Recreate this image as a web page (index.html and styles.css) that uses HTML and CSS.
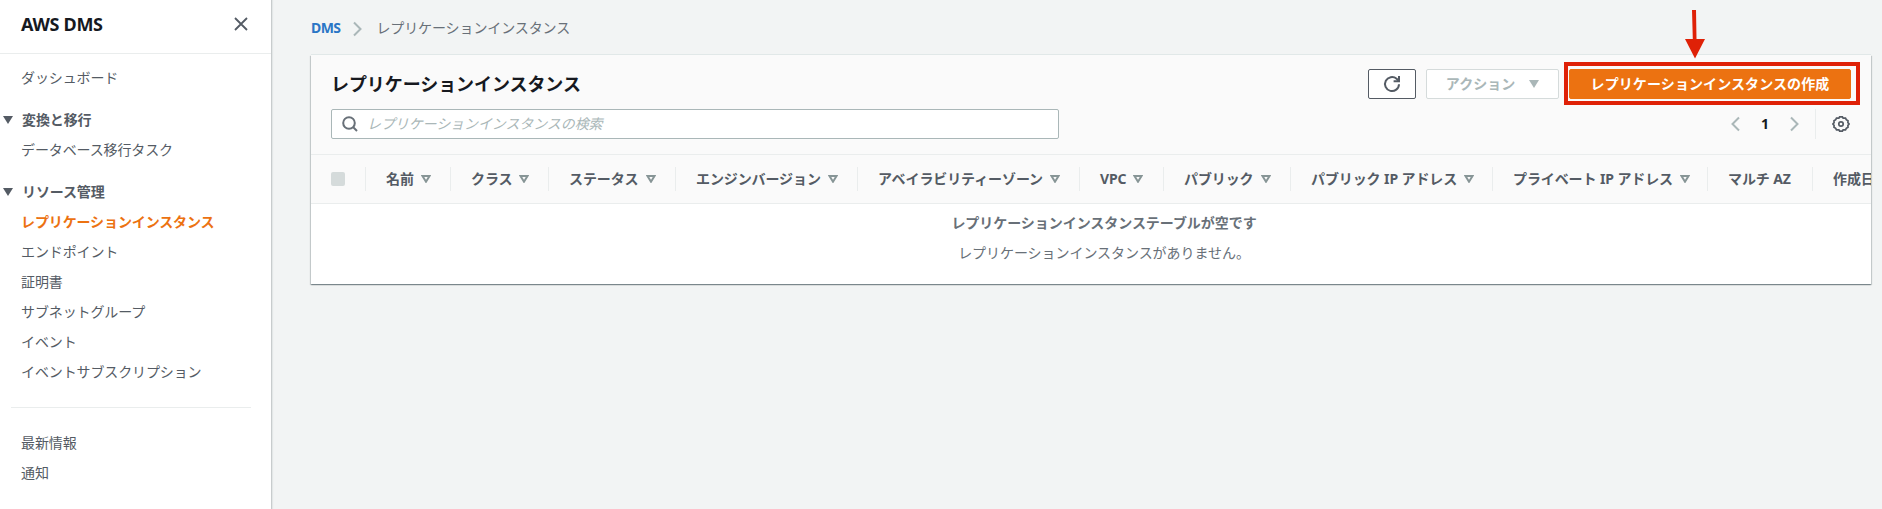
FILE: index.html
```html
<!DOCTYPE html>
<html lang="ja">
<head>
<meta charset="utf-8">
<title>AWS DMS</title>
<link rel="stylesheet" href="styles.css">
</head>
<body>
<div class="app">
  <nav class="sidebar">
    <div class="sidebar-head">
      <span>AWS DMS</span>
      <svg class="close" width="14" height="14" viewBox="0 0 14 14"><path d="M1 1l12 12M13 1L1 13"/></svg>
    </div>
    <ul class="nav">
      <li>ダッシュボード</li>
      <li class="section"><svg width="10" height="8" viewBox="0 0 10 8"><path d="M0 0h10L5 8z"/></svg>変換と移行</li>
      <li>データベース移行タスク</li>
      <li class="section"><svg width="10" height="8" viewBox="0 0 10 8"><path d="M0 0h10L5 8z"/></svg>リソース管理</li>
      <li class="active">レプリケーションインスタンス</li>
      <li>エンドポイント</li>
      <li>証明書</li>
      <li>サブネットグループ</li>
      <li>イベント</li>
      <li>イベントサブスクリプション</li>
    </ul>
    <ul class="nav nav-extra">
      <li>最新情報</li>
      <li>通知</li>
    </ul>
  </nav>
  <main class="main">
    <div class="breadcrumb">
      <a class="crumb-link">DMS</a>
      <svg width="9" height="16" viewBox="0 0 9 16"><path d="M1 1.5L7.5 8 1 14.5"/></svg>
      <span>レプリケーションインスタンス</span>
    </div>
    <section class="panel">
      <div class="panel-head">
        <div class="title-row">
          <h1>レプリケーションインスタンス</h1>
          <div class="actions">
            <button class="btn refresh"><svg width="18" height="18" viewBox="0 0 18 18"><path d="M16 9.2A7 7 0 1 1 13.6 3.8L16 6"/><path d="M16 1v5.2h-5.4"/></svg></button>
            <button class="btn disabled">アクション<svg width="10" height="8" viewBox="0 0 10 8"><path d="M0 0h10L5 8z"/></svg></button>
            <div class="create-wrap">
              <button class="btn primary">レプリケーションインスタンスの作成</button>
              <span class="highlight"></span>
              <svg class="arrow" width="22" height="50" viewBox="0 0 22 50"><path d="M8 1h4l.5 29h8.500L11 49.500 1 30h7.800z"/></svg>
            </div>
          </div>
        </div>
        <div class="filter-row">
          <div class="search">
            <svg width="16" height="16" viewBox="0 0 16 16"><circle cx="7" cy="7" r="5.800"/><path d="M11 11l4 4"/></svg>
            <span>レプリケーションインスタンスの検索</span>
          </div>
          <div class="pager">
            <svg width="9" height="16" viewBox="0 0 9 16"><path d="M8 1.500L1.500 8 8 14.500"/></svg>
            <b>1</b>
            <svg width="9" height="16" viewBox="0 0 9 16"><path d="M1 1.500L7.500 8 1 14.500"/></svg>
            <span class="settings"><svg width="18" height="18" viewBox="0 0 18 18"><path d="M7.600 1.900h2.800l.7 1.300 2.400-.1.800 1.600 1.700 1-.1 1.900 1.200 1.400-1.200 1.400.1 1.900-1.700 1-.8 1.600-2.400-.1-.7 1.300H7.600l-.7-1.300-2.400.1-.8-1.600-1.700-1 .1-1.900L.9 9l1.200-1.400L2 5.700l1.700-1 .8-1.600 2.400.1z"/><circle cx="9" cy="9" r="2.200"/></svg></span>
          </div>
        </div>
      </div>
      <div class="thead">
        <div class="th check"><i></i></div>
        <div class="th">名前<svg class="sort" width="10" height="8" viewBox="0 0 10 8"><path d="M1.500 1h7L5 6.700z"/></svg></div>
        <div class="th">クラス<svg class="sort" width="10" height="8" viewBox="0 0 10 8"><path d="M1.500 1h7L5 6.700z"/></svg></div>
        <div class="th">ステータス<svg class="sort" width="10" height="8" viewBox="0 0 10 8"><path d="M1.500 1h7L5 6.700z"/></svg></div>
        <div class="th">エンジンバージョン<svg class="sort" width="10" height="8" viewBox="0 0 10 8"><path d="M1.500 1h7L5 6.700z"/></svg></div>
        <div class="th">アベイラビリティーゾーン<svg class="sort" width="10" height="8" viewBox="0 0 10 8"><path d="M1.500 1h7L5 6.700z"/></svg></div>
        <div class="th">VPC<svg class="sort" width="10" height="8" viewBox="0 0 10 8"><path d="M1.500 1h7L5 6.700z"/></svg></div>
        <div class="th">パブリック<svg class="sort" width="10" height="8" viewBox="0 0 10 8"><path d="M1.500 1h7L5 6.700z"/></svg></div>
        <div class="th">パブリック IP アドレス<svg class="sort" width="10" height="8" viewBox="0 0 10 8"><path d="M1.500 1h7L5 6.700z"/></svg></div>
        <div class="th">プライベート IP アドレス<svg class="sort" width="10" height="8" viewBox="0 0 10 8"><path d="M1.500 1h7L5 6.700z"/></svg></div>
        <div class="th">マルチ AZ</div>
        <div class="th">作成日</div>
      </div>
      <div class="empty">
        <b>レプリケーションインスタンステーブルが空です</b>
        <span>レプリケーションインスタンスがありません。</span>
      </div>
    </section>
  </main>
</div>
</body>
</html>
```
FILE: styles.css
```css
* { box-sizing: border-box; }
body {
  margin: 0;
  background: #f2f4f4;
  color: #545b64;
  font: 14px/22px "Noto Sans", "Noto Sans CJK JP", sans-serif;
}
svg { flex: none; fill: none; stroke: currentColor; stroke-width: 2; }
.app { display: flex; height: 509px; overflow: hidden; }

.sidebar {
  width: 272px;
  flex: none;
  background: #fff;
  border-right: 1px solid #c8cccd;
  box-shadow: 1px 0 1px rgba(0, 28, 36, .06);
}
.sidebar-head {
  display: flex;
  align-items: center;
  justify-content: space-between;
  height: 54px;
  padding: 0 23px 5px 21px;
  border-bottom: 1px solid #eaeded;
  color: #16191f;
  font-size: 18px;
  font-weight: 700;
  letter-spacing: -.3px;
}
.close { color: #545b64; stroke-width: 1.8; }
.nav { list-style: none; margin: 0; padding: 9px 0 0 21px; letter-spacing: -.12px; }
.nav li { height: 30px; line-height: 30px; white-space: nowrap; }
.nav .section {
  display: flex;
  align-items: center;
  gap: 9px;
  height: 31px;
  margin: 11px 0 0 -18px;
  font-weight: 700;
}
.section svg { fill: currentColor; stroke: none; }
.nav .active { color: #ec7211; font-weight: 700; }
.nav-extra { margin: 20px 20px 0 11px; padding: 20px 0 0 10px; border-top: 1px solid #eaeded; }

.main { flex: 1; min-width: 0; padding: 0 11px 0 39px; }
.breadcrumb {
  display: flex;
  align-items: center;
  height: 55px;
  color: #687078;
  letter-spacing: -.1px;
}
.breadcrumb a { color: #2a76c6; font-weight: 700; letter-spacing: -.6px; }
.breadcrumb svg { margin: 2px 14px 0 13px; color: #aab7b8; }
.panel {
  height: 229px;
  background: #fff;
  box-shadow: 0 1px 1px 0 rgba(0, 28, 36, .3), 1px 1px 1px 0 rgba(0, 28, 36, .15), -1px 1px 1px 0 rgba(0, 28, 36, .15), 0 -1px 0 #e1e8e8;
}
.panel-head { height: 99px; padding: 14px 20px 0; background: #fafafa; }
.title-row { display: flex; align-items: center; justify-content: space-between; height: 30px; }
h1 { margin: 0; color: #16191f; font-size: 18px; line-height: 28px; font-weight: 700; letter-spacing: -.08px; }
.actions { display: flex; gap: 10px; }
.btn {
  display: flex;
  align-items: center;
  justify-content: center;
  height: 30px;
  padding: 0;
  border: 1px solid #545b64;
  border-radius: 2px;
  background: #fff;
  color: #545b64;
  font: inherit;
  font-weight: 700;
  white-space: nowrap;
}
.refresh { width: 48px; }
.disabled { width: 133px; gap: 14px; border-color: #d5dbdb; color: #aab7b8; }
.disabled svg { fill: currentColor; stroke: none; }
.primary { width: 282px; border-color: #ec7211; background: #ec7211; color: #fff; letter-spacing: .1px; }
.create-wrap { position: relative; }
.highlight {
  position: absolute;
  top: -7px;
  left: -5px;
  width: 296px;
  height: 43px;
  border: 4px solid #df2107;
}
.arrow { position: absolute; left: 115px; top: -60px; fill: #df2107; stroke: none; }

.filter-row { display: flex; justify-content: space-between; margin-top: 10px; height: 30px; }
.search {
  display: flex;
  align-items: center;
  gap: 9px;
  width: 728px;
  padding-left: 10px;
  border: 1px solid #aab7b8;
  border-radius: 2px;
  background: #fff;
  color: #aab7b8;
  font-style: italic;
  letter-spacing: -.1px;
}
.search svg { color: #687078; }
.pager { display: flex; align-items: center; color: #aab7b8; }
.pager b { width: 50px; text-align: center; color: #16191f; }
.settings {
  display: flex;
  align-items: center;
  height: 30px;
  margin-left: 16px;
  padding: 0 1px 0 16px;
  border-left: 1px solid #eaeded;
  color: #545b64;
}
.settings svg { stroke-width: 1.7; }

.thead {
  display: grid;
  grid-template-columns: 54px 85px 98px 127px 182px 222px 84px 127px 202px 215px 105px 60px;
  align-items: center;
  height: 50px;
  overflow: hidden;
  border: solid #eaeded;
  border-width: 1px 0;
  background: #fafafa;
  font-weight: 700;
  letter-spacing: -.1px;
}
.th {
  display: flex;
  align-items: center;
  gap: 7px;
  height: 24px;
  padding-left: 20px;
  border-left: 1px solid #eaeded;
  white-space: nowrap;
}
.th.check { border: 0; }
.check i { width: 14px; height: 14px; margin-top: -1px; border-radius: 2px; background: #d5dbdb; }
.sort { color: #879596; }
.empty {
  display: flex;
  flex-direction: column;
  align-items: center;
  gap: 8px;
  padding: 8px 0 0 26px;
  color: #687078;
  letter-spacing: -.05px;
}
```
